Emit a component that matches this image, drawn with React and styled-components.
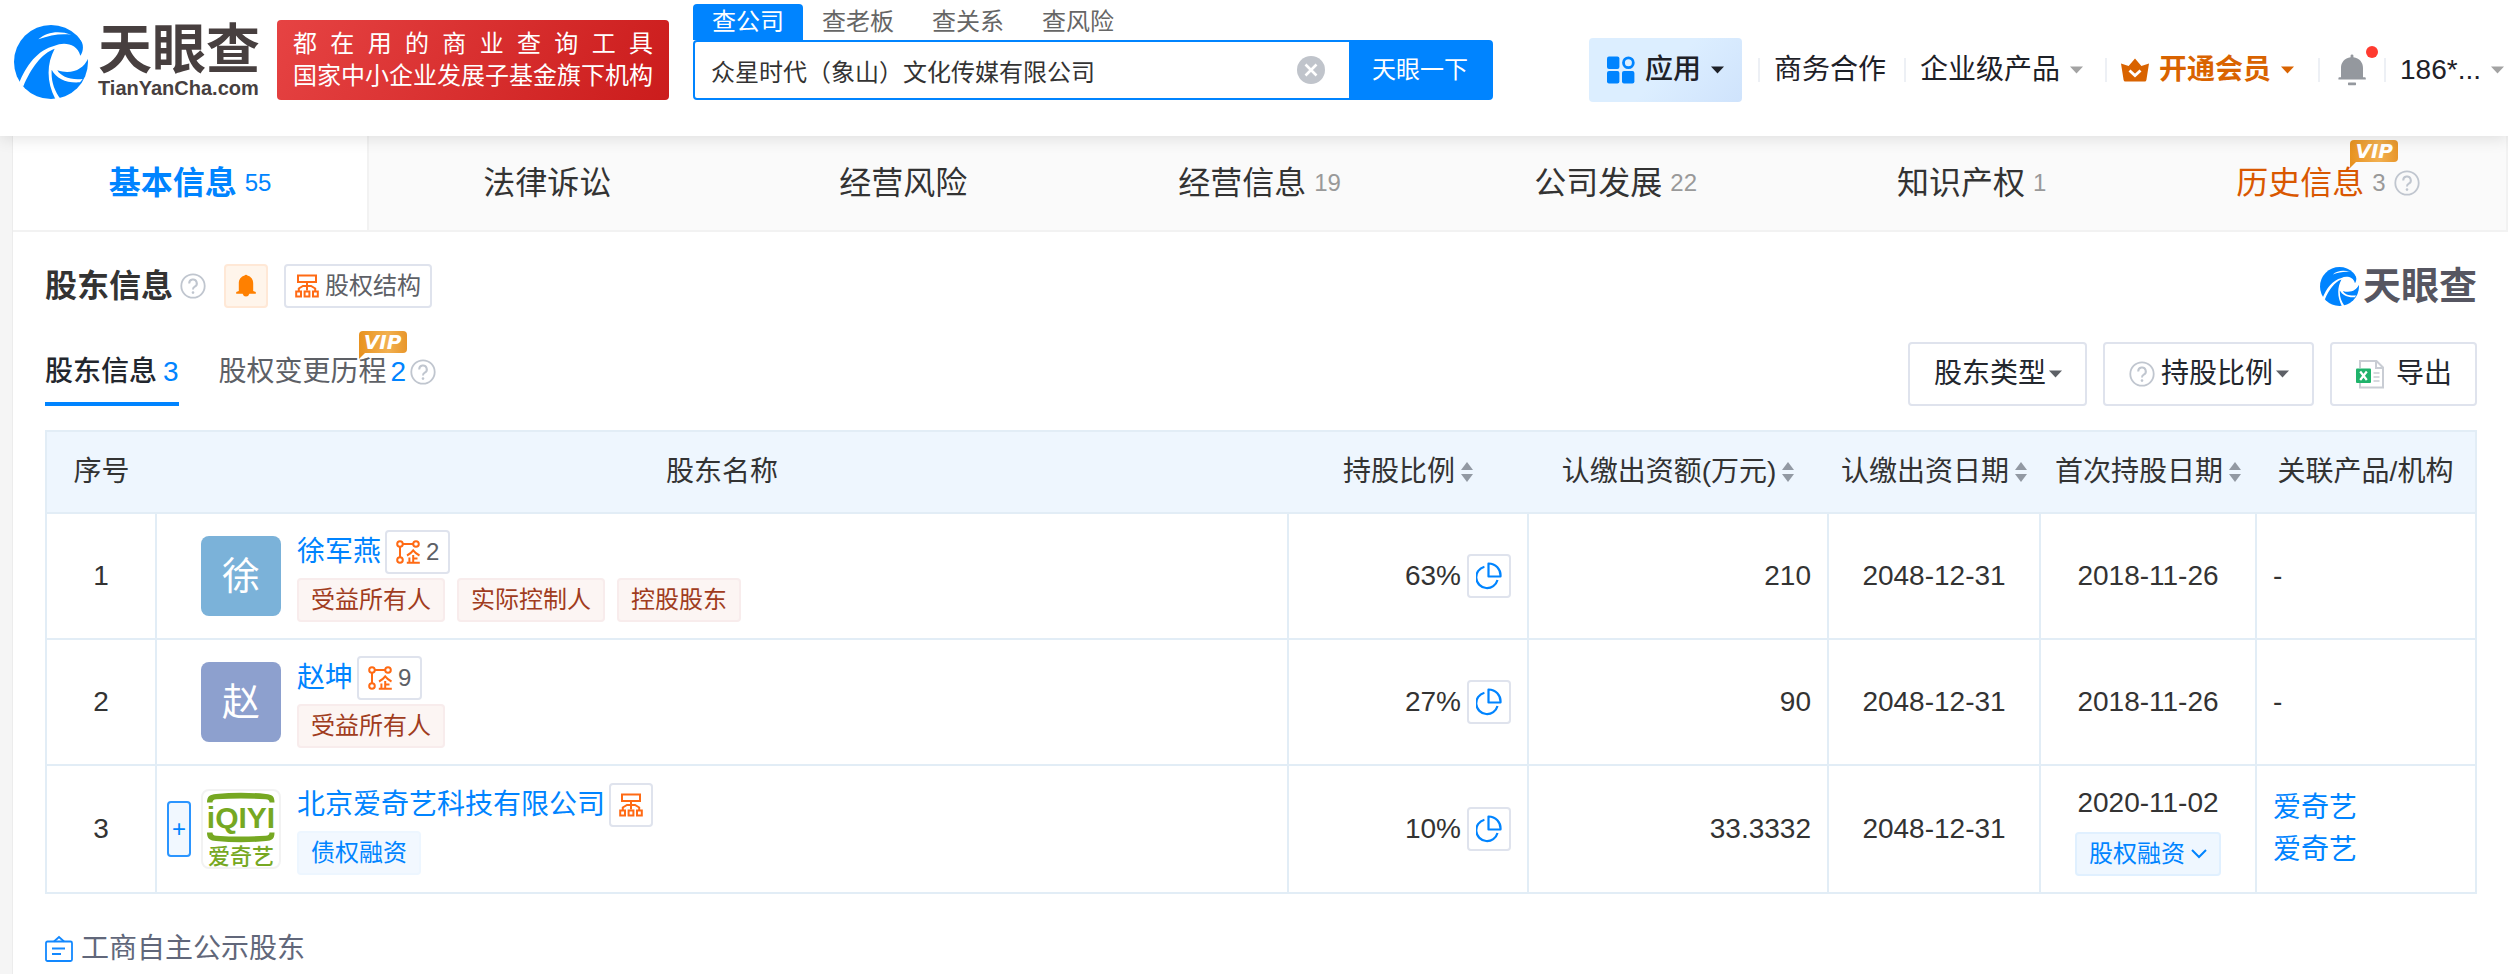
import { useState } from 'react';
import styled, { createGlobalStyle, css } from 'styled-components';

const GlobalStyle = createGlobalStyle`
  *,
  *::before,
  *::after {
    box-sizing: border-box;
  }

  body {
    margin: 0;
    background: #f5f5f5;
    color: #333;
    font-family: 'Liberation Sans', 'Noto Sans CJK SC', sans-serif;
    font-size: 28px;
    line-height: 42px;
  }

  button,
  input,
  select {
    font: inherit;
    color: inherit;
    margin: 0;
    padding: 0;
    border: 0;
    background: none;
  }

  button,
  select {
    cursor: pointer;
  }

  a {
    color: inherit;
    text-decoration: none;
  }

  svg {
    display: block;
    flex: none;
  }
`;

// ---------- Icons ----------

const LogoMark = ({ size }) => (
  <svg width={size} height={size} viewBox="42 30 222 222" aria-hidden="true">
    <circle cx="153" cy="141" r="111" fill="#0084ff" />
    <g fill="#fff">
      <path d="M115 73 C140 50 178 46 214 59 C182 55 150 60 115 73 Z" />
      <path d="M56 208 C78 150 114 104 164 92 C190 80 232 84 241 122 C250 110 253 88 240 72 L290 50 L290 110 L264 131 C250 162 216 180 172 166 C182 184 210 196 248 192 L240 202 C200 205 170 192 155 164 C153 200 163 226 182 252 L168 256 C138 200 140 146 164 101 C126 114 92 160 70 214 Z" />
    </g>
  </svg>
);

const Caret = ({ color = '#1e2128' }) => (
  <svg width="13" height="8" viewBox="0 0 13 8" aria-hidden="true">
    <path d="M0 0.5h13L6.5 7.5z" fill={color} />
  </svg>
);

const HelpIcon = () => (
  <svg width="26" height="26" viewBox="0 0 26 26" fill="none" stroke="#c0c6cf" strokeWidth="2" aria-hidden="true">
    <circle cx="13" cy="13" r="11.7" strokeWidth="1.8" />
    <path d="M9.2 10.4a3.8 3.8 0 1 1 5.6 3.3c-1.3.7-1.8 1.3-1.8 2.8" />
    <circle cx="13" cy="19.6" r="1.3" fill="#c0c6cf" stroke="none" />
  </svg>
);

const AppsIcon = () => (
  <svg width="28" height="28" viewBox="0 0 28 28" fill="#0084ff" aria-hidden="true">
    <rect width="12.4" height="12.4" rx="2" y="0.6" />
    <rect width="12.4" height="12.4" rx="2" y="15" />
    <rect width="12.4" height="12.4" rx="2" x="15" y="15" />
    <circle cx="21.4" cy="6.8" r="4.9" fill="none" stroke="#0084ff" strokeWidth="2.8" />
  </svg>
);

const CrownIcon = () => (
  <svg width="28" height="24" viewBox="0 0 28 24" aria-hidden="true">
    <path d="M0 5.500 L7.600 8 L14 0.400 L20.400 8 L28 5.500 L25.400 22 Q25.200 23.600 23.600 23.600 H4.400 Q2.800 23.600 2.600 22 Z" fill="#d96300" />
    <path d="M8.500 12.400 L14 17.600 L19.500 12.400" fill="none" stroke="#fff" strokeWidth="2.800" />
  </svg>
);

const NoticeIcon = () => (
  <svg width="28" height="32" viewBox="0 0 28 32" fill="#94989e" aria-hidden="true">
    <path d="M12.6 3.2V1.6Q12.6.4 14 .4t1.4 1.2v1.6C21.4 4 25 8.4 25 14v9.2h1.8q1 0 1 1.2v1H.4v-1.2q0-1 1-1H3V14C3 8.4 6.6 4 12.6 3.2z" />
    <rect x="10" y="28.4" width="8" height="2.8" rx="0.6" />
  </svg>
);

const BellIcon = () => (
  <svg width="20" height="24" viewBox="0 0 20 24" fill="#ff8000" aria-hidden="true">
    <path d="M8.6 1.6a1.5 1.5 0 0 1 2.8 0C15 2.6 17.2 5.6 17.2 9.4V17l2.6 1v1.8H13.4a3.5 3.5 0 0 1-6.8 0H.2V18l2.600-1V9.4C2.8 5.6 5 2.6 8.6 1.6z" />
  </svg>
);

const OrgIcon = () => (
  <svg width="24" height="24" viewBox="0 0 24 24" fill="none" stroke="#ff6a14" strokeWidth="2" aria-hidden="true">
    <rect x="3" y="1.5" width="18" height="6.5" />
    <path d="M12 8v8.5M3.8 17v-2.5L8 12h8l4.2 2.5V17" />
    <rect x="1.2" y="17.5" width="4.8" height="5" />
    <rect x="9.6" y="17.5" width="4.8" height="5" />
    <rect x="18" y="17.5" width="4.8" height="5" />
  </svg>
);

const RelationIcon = () => (
  <svg width="24" height="24" viewBox="0 0 24 24" fill="none" stroke="#ff6a14" strokeWidth="2" aria-hidden="true">
    <circle cx="4" cy="4" r="2.8" />
    <circle cx="20" cy="4" r="2.8" />
    <circle cx="4" cy="20" r="2.8" />
    <path d="M7 4h10M4 7v10" />
    <path d="M11 15.5Q15 13.5 17.2 10.4Q19.5 13.5 23.5 15.5M17.2 15v7.5M13.4 17.5v5M17.5 18.5h4M10.8 22.8h13" />
  </svg>
);

const PieIcon = () => (
  <svg width="26" height="30" viewBox="0 0 26 30" fill="none" stroke="#0084ff" strokeWidth="2.2" aria-hidden="true">
    <path d="M12.5 2.5A12 12 0 0 1 24.5 15.5H12.500z" strokeLinejoin="round" />
    <path d="M8.4 5.8A10.8 10.8 0 1 0 21.5 19" />
  </svg>
);

const SheetIcon = () => (
  <svg width="28" height="30" viewBox="0 0 28 30" fill="none" aria-hidden="true">
    <path d="M4 9V2h16.5L27 8.5V28.5H4V24" stroke="#c9cdd4" strokeWidth="2" />
    <path d="M20 2v7h7" stroke="#c9cdd4" strokeWidth="2" />
    <path d="M17.5 14h6M17.5 18h6M17.5 22h6" stroke="#c9cdd4" strokeWidth="1.6" />
    <rect y="9.5" width="15" height="14.5" rx="1" fill="#1fb36b" />
    <path d="M4.2 12.5l6.6 8.5M10.8 12.5l-6.600 8.5" stroke="#fff" strokeWidth="2.2" />
  </svg>
);

const NoteIcon = () => (
  <svg width="28" height="28" viewBox="0 0 28 28" fill="none" stroke="#1288ff" strokeWidth="1.8" aria-hidden="true">
    <rect x="1" y="6.5" width="26" height="19.5" rx="1.5" />
    <path d="M9 6.5L14 2l5 4.5M7 13.5h13M7 19h9" />
  </svg>
);

const ChevronIcon = () => (
  <svg width="16" height="10" viewBox="0 0 16 10" fill="none" stroke="#0084ff" strokeWidth="2" aria-hidden="true">
    <path d="M1 1l7 7 7-7" />
  </svg>
);

const ClearIcon = () => (
  <svg width="28" height="28" viewBox="0 0 28 28" aria-hidden="true">
    <circle cx="14" cy="14" r="14" fill="#c0c4cb" />
    <path d="M8.5 8.5l11 11M19.5 8.5l-11 11" stroke="#fff" strokeWidth="2.6" />
  </svg>
);

const SortIcon = () => (
  <svg width="12" height="20" viewBox="0 0 12 20" fill="#9299a3" aria-hidden="true">
    <path d="M0 8L6 0l6 8zM0 12h12l-6 8z" />
  </svg>
);

const IqiyiLogo = () => (
  <svg width="76" height="76" viewBox="2 2 76 76" fill="#76a822" overflow="visible" role="img" aria-label="爱奇艺">
    <path d="M6 13.500C6 7 9 5.500 15 5q25-2.400 50 0c6 .5 8.500 2 8.500 8.500h-5c0-2-1-3-4-3.200q-24.500-1.800-49 0c-3 .2-4 1.200-4 3.200z" />
    <path d="M6 43.500C6 50 9 51.500 15 52q25 2.400 50 0c6-.5 8.500-2 8.500-8.500h-5c0 2-1 3-4 3.200q-24.500 1.800-49 0c-3-.2-4-1.200-4-3.200z" />
    <text x="40" y="39" textAnchor="middle" fontFamily="'Liberation Sans', sans-serif" fontWeight="700" fontSize="30">
      iQIYI
    </text>
    <text x="40" y="75" textAnchor="middle" fontFamily="'Noto Sans CJK SC', sans-serif" fontWeight="500" fontSize="22">
      爱奇艺
    </text>
  </svg>
);

// ---------- Header ----------

const Header = styled.header`
  position: relative;
  z-index: 2;
  display: flex;
  align-items: flex-end;
  padding: 4px 4px 36px 14px;
  background: #fff;
  box-shadow: 0 2px 16px rgba(0, 0, 0, 0.12);
`;

const Brand = styled.a`
  display: flex;
  align-items: center;
  gap: ${(p) => (p.$small ? 4 : 10)}px;
  margin-right: ${(p) => (p.$small ? 0 : 19)}px;
  color: ${(p) => (p.$small ? '#565661' : '#473f3f')};
`;

const BrandText = styled.span`
  display: flex;
  flex-direction: column;
  width: ${(p) => (p.$small ? 'auto' : '160px')};
  font-weight: 700;
  font-size: ${(p) => (p.$small ? 38 : 54)}px;
  line-height: ${(p) => (p.$small ? 40 : 52)}px;
  white-space: nowrap;
`;

const BrandDomain = styled.span`
  font-size: 20px;
  line-height: 24px;
`;

const Slogan = styled.div`
  width: 392px;
  padding: 8px 16px;
  border-radius: 4px;
  background: linear-gradient(120deg, #e64343, #cb1c1c);
  color: #fff;
  font-size: 24px;
  line-height: 32px;
  white-space: nowrap;
`;

const Spread = styled.div`
  display: flex;
  justify-content: space-between;
`;

const Search = styled.form`
  width: 800px;
  margin-left: 24px;
  font-size: 24px;
`;

const SearchTabs = styled.div`
  display: flex;
`;

const SearchTab = styled.button`
  width: 110px;
  height: 36px;
  border-radius: 4px 4px 0 0;
  line-height: 36px;
  color: ${(p) => (p.$active ? '#fff' : '#666')};
  background: ${(p) => (p.$active ? '#0084ff' : 'transparent')};
`;

const SearchBox = styled.div`
  display: flex;
  align-items: center;
  height: 60px;
  border: 2px solid #0084ff;
  border-radius: 4px;
`;

const SearchInput = styled.input`
  flex: 1;
  min-width: 0;
  height: 100%;
  padding-left: 16px;
  outline: none;
`;

const ClearButton = styled.button`
  margin-right: 24px;
`;

const SearchSubmit = styled.button`
  width: 142px;
  height: 100%;
  background: #0084ff;
  color: #fff;
`;

const Nav = styled.nav`
  display: flex;
  align-items: center;
  height: 60px;
  margin-left: auto;
  color: #1e2128;
  white-space: nowrap;
`;

const AppsButton = styled.button`
  display: flex;
  align-items: center;
  gap: 10px;
  height: 64px;
  padding: 0 18px;
  margin-right: 16px;
  border-radius: 4px;
  background: linear-gradient(135deg, #dceeff 50%, #cfe3fc);
  font-weight: 500;
`;

const NavItem = styled.div`
  position: relative;
  display: flex;
  align-items: center;
  padding: 0 ${(p) => p.$end || 0}px 0 16px;

  &::before {
    content: '';
    position: absolute;
    left: 0;
    width: 2px;
    height: 24px;
    background: #edf0f5;
  }
`;

const NavLink = styled.a`
  display: flex;
  align-items: center;
  gap: 10px;

  ${(p) =>
    p.$vip &&
    css`
      color: #d96300;
      font-weight: 700;
    `}
`;

const NoticeButton = styled.button`
  position: relative;
  margin-left: 4px;

  &::after {
    content: '';
    position: absolute;
    top: -8px;
    right: -12px;
    width: 12px;
    height: 12px;
    border-radius: 50%;
    background: #ff3b30;
  }
`;

// ---------- Category tabs ----------

const Page = styled.main`
  min-height: calc(100vh - 136px);
  margin-left: 12px;
  border-left: 1px solid #ececec;
  background: #fff;
`;

const Categories = styled.nav`
  display: grid;
  grid-template-columns: repeat(7, 1fr);
  height: 96px;
  border-right: 2px solid #f2f2f2;
  border-bottom: 2px solid #f2f2f2;
  background: #fafafa;
`;

const Category = styled.a`
  display: flex;
  align-items: center;
  justify-content: center;
  gap: 8px;
  font-size: 32px;

  ${(p) =>
    p.$active &&
    css`
      border-right: 2px solid #f2f2f2;
      background: #fff;
      color: #0084ff;
      font-weight: 700;
    `}
  ${(p) => p.$history && 'color: #d95700;'}
`;

const Count = styled.span`
  font-size: 24px;
  font-weight: 400;
  color: ${(p) => (p.$active ? '#0084ff' : '#999')};
`;

const VipAnchor = styled.span`
  position: relative;
`;

const VipBadge = styled.span`
  position: absolute;
  right: ${(p) => p.$right}px;
  top: ${(p) => p.$top}px;
  width: 48px;
  height: 22px;
  border-radius: 4px 4px 4px 0;
  background: linear-gradient(90deg, #e8921f, #f2b050 60%, #e8962a);
  color: #fff;
  font: italic 700 20px/22px 'DejaVu Sans', sans-serif;
  text-align: center;

  &::after {
    content: '';
    position: absolute;
    left: 0;
    top: 22px;
    border-top: 6px solid #e8921f;
    border-right: 6px solid transparent;
  }
`;

// ---------- Shareholder section ----------

const Section = styled.section`
  padding: 32px 31px 0 32px;
`;

const Row = styled.div`
  display: flex;
  align-items: center;
`;

const Title = styled.h2`
  margin: 0 7px 0 0;
  font-size: 32px;
  line-height: 44px;
  font-weight: 700;
`;

const SquareButton = styled.button`
  display: inline-flex;
  align-items: center;
  justify-content: center;
  gap: 6px;
  min-width: 44px;
  height: 44px;
  padding: 0 ${(p) => (p.$text ? 9 : 0)}px;
  border: 2px solid ${(p) => (p.$warm ? '#ffe8d6' : '#dfe3ed')};
  border-radius: 4px;
  background: ${(p) => (p.$warm ? '#fff5eb' : '#fff')};
  color: #5d6066;
  font-size: 24px;
  line-height: 36px;
`;

const TitleActions = styled.div`
  display: flex;
  gap: 16px;
  margin-left: 18px;
  margin-right: auto;
`;

const Toolbar = styled.div`
  display: flex;
  justify-content: space-between;
  margin: 34px 0 24px;
`;

const SubTabs = styled.div`
  display: flex;
  gap: 40px;
  height: 64px;
`;

const SubTab = styled.button`
  display: flex;
  align-items: center;
  gap: ${(p) => (p.$active ? 6 : 4)}px;
  height: 64px;
  border-bottom: 4px solid ${(p) => (p.$active ? '#0084ff' : 'transparent')};
  color: ${(p) => (p.$active ? '#23272e' : '#5d6066')};
  font-weight: ${(p) => (p.$active ? 500 : 400)};
`;

const SubCount = styled.span`
  color: #0084ff;
`;

const Filters = styled.div`
  display: flex;
  gap: 16px;
  color: #23272e;
`;

const filterBox = css`
  display: flex;
  align-items: center;
  height: 64px;
  padding: 0 23px 0 24px;
  border: 2px solid #dfe3ed;
  border-radius: 4px;
`;

const Filter = styled.label`
  ${filterBox}
  gap: 6px;
`;

// the browser reserves a few pixels after the option text
const FilterSelect = styled.select`
  appearance: none;
  outline: none;
  margin-right: -4px;
`;

const ExportButton = styled.button`
  ${filterBox}
  gap: 12px;
`;

const Table = styled.table`
  width: 100%;
  table-layout: fixed;
  border-collapse: collapse;
  border: 2px solid #e2edf6;
`;

const Col = styled.col`
  width: ${(p) => p.$width};
`;

const Th = styled.th`
  height: 82px;
  padding: 0;
  border-bottom: 2px solid #e2edf6;
  background: #eef6fe;
  font-weight: 400;
  text-align: center;
  white-space: nowrap;
`;

const HeadCell = styled.div`
  display: flex;
  align-items: center;
  justify-content: center;
  gap: 6px;
`;

const Td = styled.td`
  height: 126px;
  padding: 16px;
  border: 2px solid #e2edf6;
  text-align: ${(p) => p.$align || 'left'};

  tr:last-child > & {
    height: 128px;
  }
`;

const NameTd = styled(Td)`
  padding: 16px 10px;
`;

const Holder = styled.div`
  display: flex;
  align-items: center;
`;

const ExpandSlot = styled.div`
  flex: none;
  width: 34px;
`;

const ExpandButton = styled.button`
  display: block;
  width: 24px;
  height: 56px;
  border: 2px solid #2b95ff;
  border-radius: 4px;
  background: #f1f8ff;
  color: #0084ff;
  font-size: 24px;
  line-height: 50px;
`;

const Avatar = styled.div`
  flex: none;
  display: flex;
  align-items: center;
  justify-content: center;
  width: 80px;
  height: 80px;
  margin-right: 16px;
  border: ${(p) => (p.$color ? 'none' : '2px solid #f2f2f2')};
  border-radius: 8px;
  background: ${(p) => p.$color || '#fff'};
  color: #fff;
  font-size: 38px;
`;

const HolderInfo = styled.div`
  display: flex;
  flex-direction: column;
  gap: 4px;
`;

const NameRow = styled.div`
  display: flex;
  align-items: center;
  gap: 4px;
`;

const Link = styled.a`
  display: ${(p) => (p.$block ? 'block' : 'inline')};
  color: #0084ff;
`;

const Tags = styled.div`
  display: flex;
  gap: 12px;
`;

const Tag = styled.span`
  height: 44px;
  padding: 0 12px;
  border: 2px solid ${(p) => (p.$blue ? '#edf6ff' : '#f8ecec')};
  border-radius: 4px;
  background: ${(p) => (p.$blue ? '#f2f8ff' : '#fcf5f3')};
  color: ${(p) => (p.$blue ? '#0084ff' : '#a03c20')};
  font-size: 24px;
  line-height: 40px;
`;

const Ratio = styled.div`
  display: flex;
  align-items: center;
  justify-content: flex-end;
  gap: 6px;
`;

const DateStack = styled.div`
  display: flex;
  flex-direction: column;
  align-items: center;
  gap: 8px;
`;

const FinanceButton = styled.button`
  display: flex;
  align-items: center;
  gap: 6px;
  height: 44px;
  padding: 0 12px;
  border: 2px solid #e0f0ff;
  border-radius: 4px;
  background: #eff7ff;
  color: #0084ff;
  font-size: 24px;
`;

const SourceNote = styled.a`
  display: inline-flex;
  align-items: center;
  gap: 8px;
  margin-top: 34px;
  color: #61677a;
`;

const categories = [
  { label: '基本信息', count: 55, active: true },
  { label: '法律诉讼' },
  { label: '经营风险' },
  { label: '经营信息', count: 19 },
  { label: '公司发展', count: 22 },
  { label: '知识产权', count: 1 },
  { label: '历史信息', count: 3, history: true },
];

const columns = [
  { label: '序号', width: '110px' },
  { label: '股东名称', width: 'auto' },
  { label: '持股比例', width: '240px', sort: true },
  { label: '认缴出资额(万元)', width: '300px', sort: true },
  { label: '认缴出资日期', width: '212px', sort: true },
  { label: '首次持股日期', width: '216px', sort: true },
  { label: '关联产品/机构', width: '220px' },
];

const holders = [
  {
    name: '徐军燕',
    color: '#7bb2d9',
    related: 2,
    tags: ['受益所有人', '实际控制人', '控股股东'],
    ratio: '63%',
    amount: '210',
    due: '2048-12-31',
    since: '2018-11-26',
  },
  {
    name: '赵坤',
    color: '#8da0ce',
    related: 9,
    tags: ['受益所有人'],
    ratio: '27%',
    amount: '90',
    due: '2048-12-31',
    since: '2018-11-26',
  },
  {
    name: '北京爱奇艺科技有限公司',
    company: true,
    tags: ['债权融资'],
    ratio: '10%',
    amount: '33.3332',
    due: '2048-12-31',
    since: '2020-11-02',
    round: '股权融资',
    products: ['爱奇艺', '爱奇艺'],
  },
];

const searchTabs = ['查公司', '查老板', '查关系', '查风险'];

const SiteHeader = () => {
  const [tab, setTab] = useState(searchTabs[0]);
  const [query, setQuery] = useState('众星时代（象山）文化传媒有限公司');

  return (
    <Header>
      <Brand href="#">
        <LogoMark size={74} />
        <BrandText>
          天眼查
          <BrandDomain>TianYanCha.com</BrandDomain>
        </BrandText>
      </Brand>
      <Slogan>
        <Spread>
          {[...'都在用的商业查询工具'].map((char) => (
            <span key={char}>{char}</span>
          ))}
        </Spread>
        国家中小企业发展子基金旗下机构
      </Slogan>
      <Search onSubmit={(e) => e.preventDefault()}>
        <SearchTabs>
          {searchTabs.map((label) => (
            <SearchTab type="button" key={label} $active={tab === label} onClick={() => setTab(label)}>
              {label}
            </SearchTab>
          ))}
        </SearchTabs>
        <SearchBox>
          <SearchInput type="text" aria-label="搜索公司" value={query} onChange={(e) => setQuery(e.target.value)} />
          <ClearButton type="button" aria-label="清空" onClick={() => setQuery('')}>
            <ClearIcon />
          </ClearButton>
          <SearchSubmit type="submit">天眼一下</SearchSubmit>
        </SearchBox>
      </Search>
      <Nav>
        <AppsButton type="button">
          <AppsIcon />
          应用
          <Caret />
        </AppsButton>
        <NavItem $end={18}>
          <NavLink href="#">商务合作</NavLink>
        </NavItem>
        <NavItem $end={22}>
          <NavLink href="#">
            企业级产品
            <Caret color="#a3a3a3" />
          </NavLink>
        </NavItem>
        <NavItem $end={24}>
          <NavLink href="#" $vip>
            <CrownIcon />
            开通会员
            <Caret color="#d96300" />
          </NavLink>
        </NavItem>
        <NavItem $end={18}>
          <NoticeButton type="button" aria-label="消息">
            <NoticeIcon />
          </NoticeButton>
        </NavItem>
        <NavItem>
          <NavLink href="#">
            186*...
            <Caret color="#a3a3a3" />
          </NavLink>
        </NavItem>
      </Nav>
    </Header>
  );
};

const HolderRow = ({ holder, index }) => (
  <tr>
    <Td $align="center">{index + 1}</Td>
    <NameTd>
      <Holder>
        <ExpandSlot>
          {holder.company && (
            <ExpandButton type="button" aria-label="展开">
              +
            </ExpandButton>
          )}
        </ExpandSlot>
        <Avatar $color={holder.color}>{holder.company ? <IqiyiLogo /> : holder.name[0]}</Avatar>
        <HolderInfo>
          <NameRow>
            <Link href="#">{holder.name}</Link>
            {holder.company ? (
              <SquareButton type="button" aria-label="股权结构">
                <OrgIcon />
              </SquareButton>
            ) : (
              <SquareButton type="button" $text>
                <RelationIcon />
                {holder.related}
              </SquareButton>
            )}
          </NameRow>
          <Tags>
            {holder.tags.map((tag) => (
              <Tag key={tag} $blue={holder.company}>
                {tag}
              </Tag>
            ))}
          </Tags>
        </HolderInfo>
      </Holder>
    </NameTd>
    <Td>
      <Ratio>
        {holder.ratio}
        <SquareButton type="button" aria-label="持股比例">
          <PieIcon />
        </SquareButton>
      </Ratio>
    </Td>
    <Td $align="right">{holder.amount}</Td>
    <Td $align="center">{holder.due}</Td>
    <Td $align="center">
      {holder.round ? (
        <DateStack>
          {holder.since}
          <FinanceButton type="button">
            {holder.round}
            <ChevronIcon />
          </FinanceButton>
        </DateStack>
      ) : (
        holder.since
      )}
    </Td>
    <Td>
      {holder.products
        ? holder.products.map((product, i) => (
            <Link href="#" $block key={i}>
              {product}
            </Link>
          ))
        : '-'}
    </Td>
  </tr>
);

const App = () => (
  <>
    <GlobalStyle />
    <SiteHeader />
    <Page>
      <Categories>
        {categories.map(({ label, count, active, history }) => (
          <Category href="#" key={label} $active={active} $history={history}>
            <VipAnchor>
              {label}
              {history && (
                <VipBadge $right={-34} $top={-22}>
                  VIP
                </VipBadge>
              )}
            </VipAnchor>
            {count && <Count $active={active}>{count}</Count>}
            {history && <HelpIcon />}
          </Category>
        ))}
      </Categories>

      <Section>
        <Row>
          <Title>股东信息</Title>
          <HelpIcon />
          <TitleActions>
            <SquareButton type="button" $warm aria-label="订阅">
              <BellIcon />
            </SquareButton>
            <SquareButton type="button" $text>
              <OrgIcon />
              股权结构
            </SquareButton>
          </TitleActions>
          <Brand href="#" $small>
            <LogoMark size={39} />
            <BrandText $small>天眼查</BrandText>
          </Brand>
        </Row>

        <Toolbar>
          <SubTabs>
            <SubTab type="button" $active>
              股东信息
              <SubCount>3</SubCount>
            </SubTab>
            <SubTab type="button">
              <VipAnchor>
                股权变更历程
                <VipBadge $right={-20} $top={-20}>
                  VIP
                </VipBadge>
              </VipAnchor>
              <SubCount>2</SubCount>
              <HelpIcon />
            </SubTab>
          </SubTabs>
          <Filters>
            <Filter>
              <FilterSelect aria-label="股东类型">
                <option>股东类型</option>
              </FilterSelect>
              <Caret color="#5d6066" />
            </Filter>
            <Filter>
              <HelpIcon />
              <FilterSelect aria-label="持股比例">
                <option>持股比例</option>
              </FilterSelect>
              <Caret color="#5d6066" />
            </Filter>
            <ExportButton type="button">
              <SheetIcon />
              导出
            </ExportButton>
          </Filters>
        </Toolbar>

        <Table>
          <colgroup>
            {columns.map((col) => (
              <Col key={col.label} $width={col.width} />
            ))}
          </colgroup>
          <thead>
            <tr>
              {columns.map((col) => (
                <Th key={col.label} scope="col">
                  <HeadCell>
                    {col.label}
                    {col.sort && (
                      <button type="button" aria-label={`按${col.label}排序`}>
                        <SortIcon />
                      </button>
                    )}
                  </HeadCell>
                </Th>
              ))}
            </tr>
          </thead>
          <tbody>
            {holders.map((holder, index) => (
              <HolderRow key={holder.name} holder={holder} index={index} />
            ))}
          </tbody>
        </Table>

        <SourceNote href="#">
          <NoteIcon />
          工商自主公示股东
        </SourceNote>
      </Section>
    </Page>
  </>
);

export default App;
